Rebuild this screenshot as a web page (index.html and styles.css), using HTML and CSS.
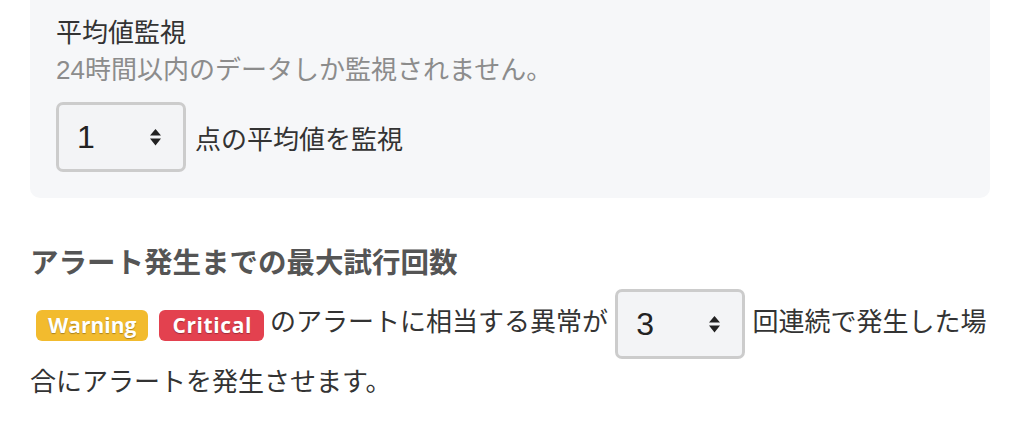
FILE: index.html
```html
<!DOCTYPE html>
<html lang="ja">
<head>
<meta charset="utf-8">
<link rel="stylesheet" href="styles.css">
</head>
<body>
<div class="panel">
  <div class="title">平均値監視</div>
  <div class="note">24時間以内のデータしか監視されません。</div>
  <div class="avg-row">
    <span class="select"><span class="val">1</span><svg class="arrows" width="11" height="17" viewBox="0 0 11 17"><path d="M5.5 0 L11 6.5 H0 Z M0 9.5 H11 L5.5 16.5 Z" fill="#222"/></svg></span>
    <span class="label">点の平均値を監視</span>
  </div>
</div>
<div class="section">
  <div class="heading">アラート発生までの最大試行回数</div>
  <p class="para"><span class="badge warning">Warning</span><span class="badge critical">Critical</span>のアラートに相当する異常が <span class="select"><span class="val">3</span><svg class="arrows" width="11" height="17" viewBox="0 0 11 17"><path d="M5.5 0 L11 6.5 H0 Z M0 9.5 H11 L5.5 16.5 Z" fill="#222"/></svg></span> 回連続で発生した場合にアラートを発生させます。</p>
</div>
</body>
</html>
```
FILE: styles.css
```css
* { box-sizing: border-box; }
body {
  margin: 0;
  background: #fff;
  font-family: "Liberation Sans", "Noto Sans CJK JP", sans-serif;
  font-size: 26px;
  color: #333;
}
.panel {
  width: 960px;
  margin-left: 30px;
  background: #f6f7f9;
  border-radius: 0 0 10px 10px;
  padding: 15px 26px 26px;
}
.title { line-height: 37px; color: #333; }
.note { line-height: 37px; color: #8c8c8c; }
.avg-row {
  margin-top: 13px;
  display: flex;
  align-items: center;
  gap: 9px;
}
.select {
  display: inline-flex;
  align-items: center;
  justify-content: space-between;
  width: 130px;
  height: 70px;
  border: 3px solid #cccccc;
  border-radius: 7px;
  background: #f3f4f6;
  padding: 0 22px 0 18px;
  color: #222;
  vertical-align: middle;
  line-height: 1;
}
.val { font-size: 32px; }
.arrows { display: block; }
.label { color: #333; }
.section {
  width: 960px;
  margin-left: 30px;
  margin-top: 45px;
}
.heading {
  font-size: 28.5px;
  font-weight: bold;
  color: #555;
  line-height: 40px;
}
.para {
  margin: 6px 0 0;
  line-height: 46px;
  color: #333;
}
.badge {
  display: inline-block;
  vertical-align: middle;
  height: 31px;
  line-height: 31px;
  border-radius: 6px;
  font-family: "Open Sans", "Liberation Sans", sans-serif;
  font-size: 21px;
  font-weight: 700;
  color: #fff;
  text-shadow: 0 1px 1px rgba(0,0,0,0.3);
  position: relative;
  top: 1px;
}
.warning {
  background: #f2bb2e;
  padding: 0 12px;
  margin-left: 6px;
  margin-right: 11px;
}
.critical {
  background: #e3414f;
  padding: 0 12px 0 13px;
  letter-spacing: 0.6px;
  margin-right: 6px;
}
```
